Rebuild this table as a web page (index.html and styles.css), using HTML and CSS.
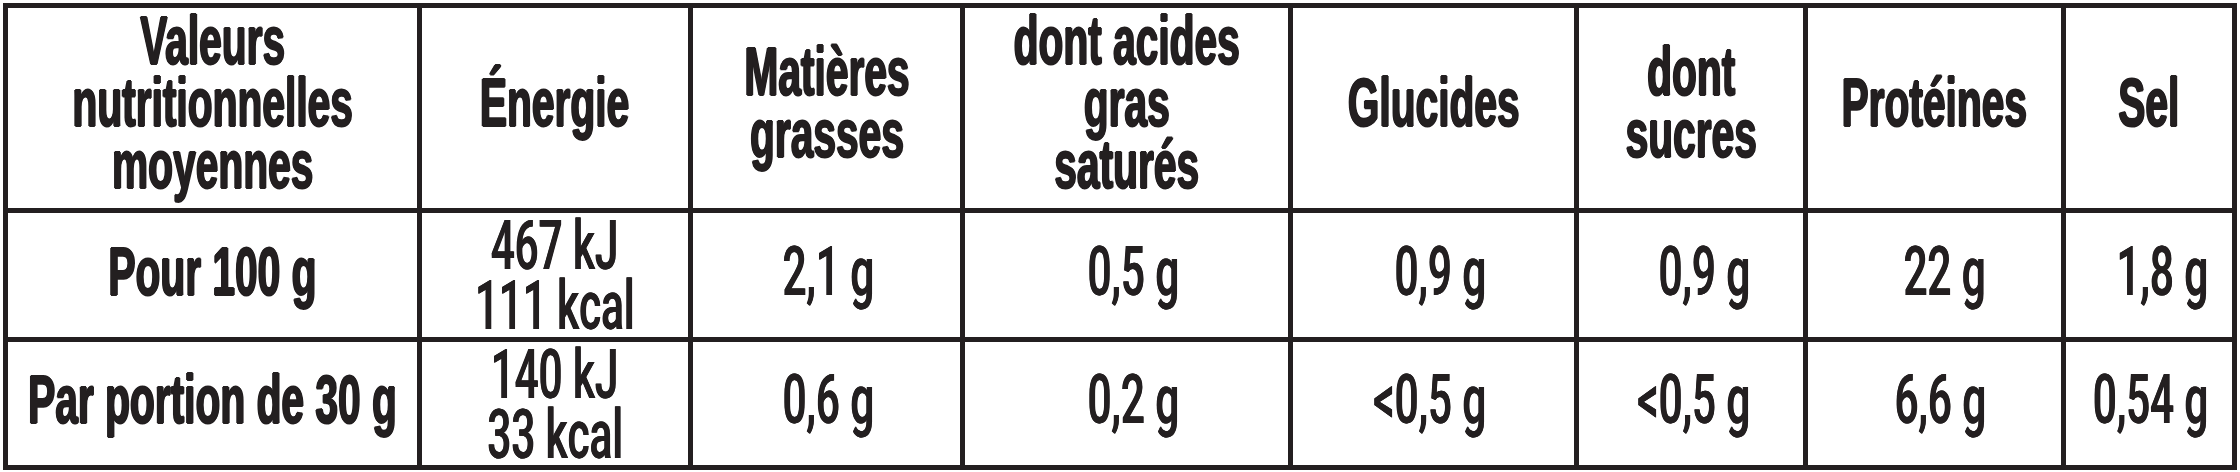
FILE: index.html
```html
<!DOCTYPE html>
<html lang="fr">
<head>
<meta charset="utf-8">
<title>Valeurs nutritionnelles</title>
<link rel="stylesheet" href="styles.css">
</head>
<body>
<div class="table">
  <div class="cell head"><span class="t b">Valeurs<br>nutritionnelles<br>moyennes</span></div>
  <div class="cell head"><span class="t b">Énergie</span></div>
  <div class="cell head"><span class="t b">Matières<br>grasses</span></div>
  <div class="cell head"><span class="t b">dont acides<br>gras<br>saturés</span></div>
  <div class="cell head"><span class="t b">Glucides</span></div>
  <div class="cell head"><span class="t b">dont<br>sucres</span></div>
  <div class="cell head"><span class="t b">Protéines</span></div>
  <div class="cell head"><span class="t b">Sel</span></div>

  <div class="cell center"><span class="t b">Pour 100 g</span></div>
  <div class="cell energy"><span class="t r line">467 kJ</span><span class="t r line">111 kcal</span></div>
  <div class="cell val c3"><span class="t r">2,1 g</span></div>
  <div class="cell val c4"><span class="t r">0,5 g</span></div>
  <div class="cell val c5"><span class="t r">0,9 g</span></div>
  <div class="cell val c6"><span class="t r">0,9 g</span></div>
  <div class="cell val c7"><span class="t r">22 g</span></div>
  <div class="cell val c8"><span class="t r">1,8 g</span></div>

  <div class="cell center"><span class="t b">Par portion de 30 g</span></div>
  <div class="cell energy"><span class="t r line">140 kJ</span><span class="t r line">33 kcal</span></div>
  <div class="cell val c3"><span class="t r">0,6 g</span></div>
  <div class="cell val c4"><span class="t r">0,2 g</span></div>
  <div class="cell val c5"><span class="t r">&lt;0,5 g</span></div>
  <div class="cell val c6"><span class="t r">&lt;0,5 g</span></div>
  <div class="cell val c7"><span class="t r">6,6 g</span></div>
  <div class="cell val c8"><span class="t r">0,54 g</span></div>
</div>
</body>
</html>
```
FILE: styles.css
```css
html, body {
  margin: 0;
  padding: 0;
  background: #ffffff;
}

body {
  font-family: "Liberation Sans", Arial, sans-serif;
  color: #231f20;
}

.table {
  margin: 3px;
  width: 2234px;
  box-sizing: border-box;
  display: grid;
  grid-template-columns: 409px 266px 267px 323px 281px 224px 253px 166px;
  grid-template-rows: 200px 124px 123px;
  gap: 5px;
  padding: 5px;
  background: #231f20;
}

.cell {
  background: #ffffff;
  display: flex;
  align-items: center;
  justify-content: center;
  overflow: visible;
  min-width: 0;
  box-sizing: border-box;
}

.head {
  padding-bottom: 11px;
}

.center,
.val {
  padding-bottom: 7px;
}

.energy {
  flex-direction: column;
  padding-top: 2px;
}

.t {
  display: inline-block;
  white-space: nowrap;
  font-size: 69px;
  text-align: center;
}

.line {
  display: block;
}

.b {
  font-weight: 700;
  line-height: 62px;
  transform: scaleX(0.59);
  text-shadow: 1.4px 0 0 #231f20, -1.4px 0 0 #231f20, 0 0.6px 0 #231f20, 0 -0.6px 0 #231f20;
}

.r {
  font-family: Roboto, "Liberation Sans", sans-serif;
  font-weight: 500;
  line-height: 60px;
  font-kerning: none;
  font-variant-ligatures: none;
  transform: scaleX(0.61);
  text-shadow: 0.6px 0 0 #231f20, -0.6px 0 0 #231f20;
}

.center .t,
.head .t,
.energy .t {
  transform-origin: 50% 50%;
}

.val {
  justify-content: flex-end;
}

.val .t {
  transform-origin: 100% 50%;
}

.c3 { padding-right: 86px; }
.c4 { padding-right: 109px; }
.c5 { padding-right: 88px; }
.c6 { padding-right: 53px; }
.c7 { padding-right: 75px; }
.c8 { padding-right: 24px; }
```
